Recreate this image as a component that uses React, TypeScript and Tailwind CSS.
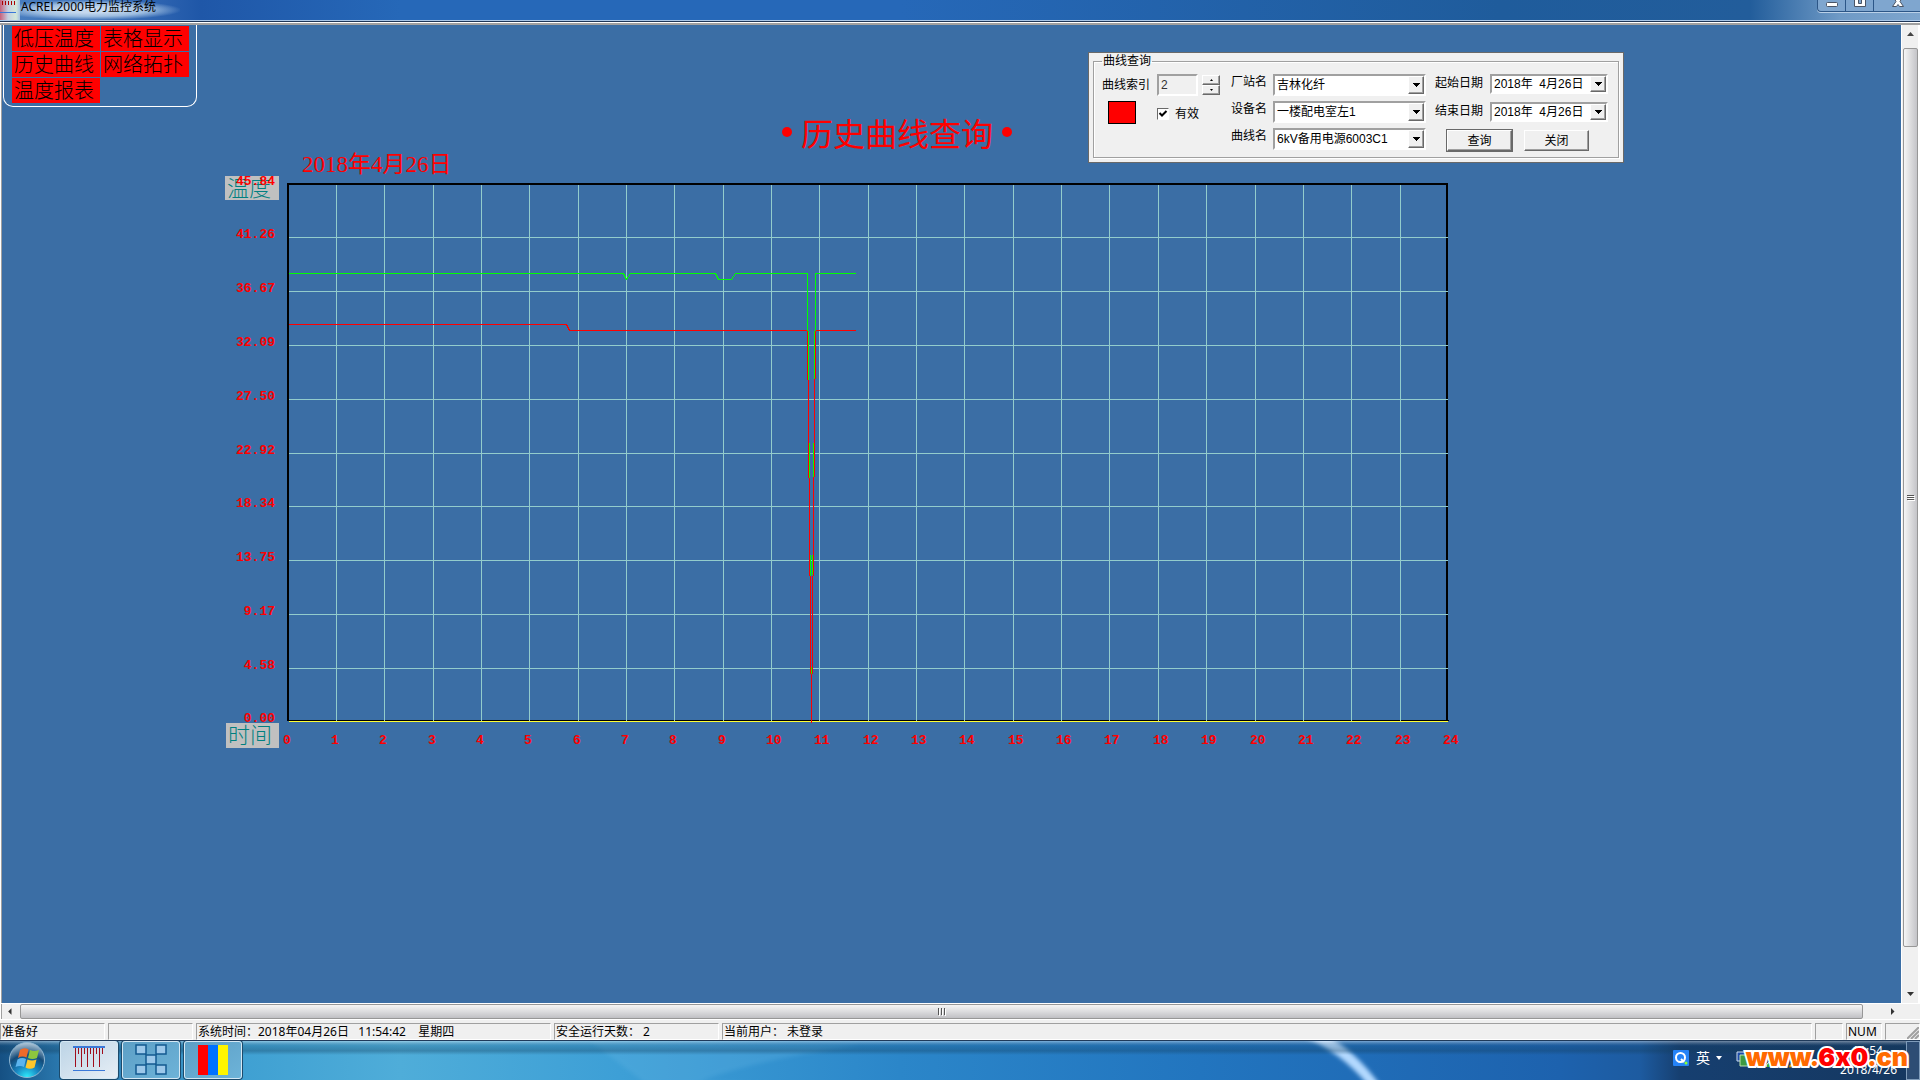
import { useState } from 'react'
import type { ReactNode } from 'react'

const HOURS = Array.from({ length: 25 }, (_, i) => i)
const TEMPERATURES = [
  '45.84',
  '41.26',
  '36.67',
  '32.09',
  '27.50',
  '22.92',
  '18.34',
  '13.75',
  '9.17',
  '4.58',
  '0.00',
]

const PLOT = { left: 288, top: 183, right: 1448, bottom: 721 }

const PAGES = ['低压温度', '表格显示', '历史曲线', '网络拓扑', '温度报表']

const GREEN_CURVE =
  'M288 273H623L626 279L630 273H715L718 279H731L735 273H807V330M808 330V379M809 442V477M810 554V575M811 666V673M812 554V574M813 442V476M814 330V378M815 330V273H855'
const RED_CURVE =
  'M288 324H566L569 330H807V379M808 379V477M809 477V575M810 575V673M811 673V722M812 575V673M813 476V575M814 378V476M815 378V330H855'

export default function App() {
  return (
    <div className="flex min-h-screen flex-col overflow-hidden bg-[#f0f0f0] font-['Noto_Sans','Noto_Sans_CJK_SC',sans-serif] text-xs text-black">
      <TitleBar />
      <div className="flex flex-1 border-l border-white">
        <main className="min-w-0 flex-1 border-l border-[#a0a0a0] bg-[#3b6ea5]">
          <div className="flex h-[151px] items-start">
            <div className="w-[460px] shrink-0">
              <PageMenu />
              <p className="mt-[46px] ml-[300px] font-['Liberation_Serif','Noto_Sans_CJK_SC',serif] text-[23px] leading-6 text-[#f00]">
                2018年4月26日
              </p>
            </div>
            <h1 className="mt-[87px] ml-[320px] flex w-[230px] shrink-0 items-center justify-between font-['Noto_Sans_CJK_SC',sans-serif] text-[32px] leading-10 font-normal whitespace-nowrap text-[#f00]">
              <span className="size-[10px] rounded-full bg-[#f00]" />
              历史曲线查询
              <span className="size-[10px] rounded-full bg-[#f00]" />
            </h1>
            <QueryPanel />
          </div>
          <HistoryChart />
        </main>
        <VerticalScroll />
      </div>
      <HorizontalScroll />
      <StatusBar />
      <Taskbar />
    </div>
  )
}

function TitleBar() {
  return (
    <header className="border-b-2 border-[#a0a0a0]">
      <div className="flex h-5 items-start justify-between overflow-hidden bg-[linear-gradient(90deg,#4a7fc0_0,#3a6fb8_120px,#1f57a8_200px,#2668b8_400px,#2668b8_900px,#1f5c9c_1500px,#225d9b_1750px,#6f9ac6_1840px,#7ea5cd_100%)]">
        <div className="flex h-5 w-[180px] bg-[radial-gradient(ellipse_at_center,#c4d8ee_20%,#9dbde0_45%,transparent_72%)]">
          <svg className="h-5 w-5" viewBox="0 0 20 20" aria-hidden="true">
            <defs>
              <linearGradient id="icon-glow">
                <stop offset="0" stopColor="#c8607c" />
                <stop offset="0.4" stopColor="#c3cfe0" />
                <stop offset="0.8" stopColor="#d3e8d8" />
                <stop offset="1" stopColor="#a5c2e3" />
              </linearGradient>
            </defs>
            <rect width="20" height="20" fill="url(#icon-glow)" />
            <path d="M2.500 1v4M5.500 1v4M8.500 1v4M11.500 1v4M14.500 1v4" stroke="#a00" />
            <path d="M0 12.500h16" stroke="#3a78d8" />
          </svg>
          <span className="ml-px leading-[14px] whitespace-nowrap">ACREL2000电力监控系统</span>
        </div>
        <div className="flex h-3 overflow-hidden rounded-bl border-b border-l border-[#2c5687] bg-[#7fa6cf] shadow-[0_1px_0_#b9d0e8]">
          <button aria-label="最小化" className="w-7 border-r border-[#2c5687]">
            <svg className="h-3 w-7" viewBox="0 0 28 12">
              <rect x="8.500" y="2.500" width="11" height="4" rx="1" fill="#fff" stroke="#4b5566" />
            </svg>
          </button>
          <button aria-label="最大化" className="w-7 border-r border-[#2c5687]">
            <svg className="h-3 w-7" viewBox="0 0 28 12">
              <path d="M8.500 -3h11v9.500h-11z" fill="#fff" stroke="#4b5566" />
              <path d="M12.500 -1h3v4.500h-3z" fill="#7fa6cf" stroke="#4b5566" />
            </svg>
          </button>
          <button aria-label="关闭" className="w-[46px]">
            <svg className="h-3 w-[46px]" viewBox="0 0 46 12">
              <path
                d="M19.500 -3L22 1.500L18.500 6.500H22.500L24 4.500L25.500 6.500H29.500L26 1.500L28.500 -3z"
                fill="#fff"
                stroke="#4b5566"
              />
            </svg>
          </button>
        </div>
      </div>
      <div className="h-px bg-[#a9c6e6]" />
      <div className="h-px bg-[#1d3557]" />
      <div className="h-px bg-white" />
    </header>
  )
}

function PageMenu() {
  return (
    <nav className="ml-px grid h-[82px] w-[194px] grid-cols-[88px_88px] content-start gap-px rounded-b-[10px] border border-t-0 border-white pt-px pl-2">
      {PAGES.map((page) => (
        <button
          key={page}
          className="flex h-[25px] justify-center bg-[#f00] pr-1 font-['Noto_Sans_CJK_SC',sans-serif] text-xl leading-[23px] font-light"
        >
          {page}
        </button>
      ))}
    </nav>
  )
}

const sunken = 'border-2 border-t-[#a0a0a0] border-l-[#a0a0a0] border-r-white border-b-white'
const raised =
  'border border-t-white border-l-white border-r-[#696969] border-b-[#696969] bg-[#f0f0f0] shadow-[inset_-1px_-1px_0_#a0a0a0]'

function QueryPanel() {
  const [enabled, setEnabled] = useState(true)

  return (
    <form
      className="mt-[27px] ml-[76px] w-[536px] shrink-0 border border-[#696969] bg-[#f0f0f0] px-1 pb-1 font-['Liberation_Sans','Noto_Sans_CJK_SC',sans-serif] text-xs leading-4"
      onSubmit={(e) => e.preventDefault()}
    >
      <fieldset className="flex h-[105px] gap-[9px] border border-[#a0a0a0] pt-[5px] pl-2 shadow-[inset_1px_1px_0_#fff,1px_1px_0_#fff]">
        <legend className="px-px">曲线查询</legend>

        <div className="flex w-[120px] flex-col gap-1">
          <div className="flex h-[22px] items-center">
            <label htmlFor="curve-index" className="w-[55px]">
              曲线索引
            </label>
            <input
              id="curve-index"
              defaultValue="2"
              className={`h-[22px] w-[41px] bg-[#f0f0f0] pl-[2px] text-[#333] ${sunken}`}
            />
            <div className="ml-1 flex flex-col">
              <SpinButton label="增加" d="M3 3h3L4.500 1z" />
              <SpinButton label="减少" d="M3 1h3L4.500 3z" />
            </div>
          </div>
          <div className="flex h-6 items-center">
            <span className="mr-[21px] ml-[6px] h-[23px] w-7 border border-black bg-[#f00]" />
            <label className="flex items-center gap-[6px] pt-1">
              <input
                type="checkbox"
                checked={enabled}
                onChange={(e) => setEnabled(e.target.checked)}
                className="peer sr-only"
              />
              <span className="block size-3 border border-t-[#696969] border-r-white border-b-white border-l-[#696969] bg-white">
                {enabled && (
                  <svg viewBox="0 0 10 10" className="size-[10px]">
                    <path d="M1.500 4L4 6.500L8.500 2" fill="none" stroke="#000" strokeWidth="2" />
                  </svg>
                )}
              </span>
              有效
            </label>
          </div>
        </div>

        <div className="flex flex-col gap-[5px]">
          <Combo id="station" label="厂站名" value="吉林化纤" />
          <Combo id="device" label="设备名" value="一楼配电室左1" />
          <Combo id="curve" label="曲线名" value="6kV备用电源6003C1" />
        </div>

        <div className="flex flex-col gap-2">
          <DateBox id="start-date" label="起始日期" />
          <DateBox id="end-date" label="结束日期" />
          <div className="flex gap-3 pl-3">
            <button className={`h-[21px] w-[65px] outline outline-[#696969] ${raised}`}>查询</button>
            <button type="button" className={`h-[21px] w-[65px] ${raised}`}>
              关闭
            </button>
          </div>
        </div>
      </fieldset>
    </form>
  )
}

function SpinButton({ label, d }: { label: string; d: string }) {
  return (
    <button
      type="button"
      aria-label={label}
      className={`flex h-[10px] w-[18px] items-center justify-center ${raised}`}
    >
      <svg className="h-1 w-[9px]" viewBox="0 0 9 4">
        <path d={d} />
      </svg>
    </button>
  )
}

function DownArrow() {
  return (
    <svg className="h-[4px] w-[7px]" viewBox="0 0 7 4" shapeRendering="crispEdges">
      <path d="M0 0h7L3.500 4z" />
    </svg>
  )
}

function Combo({ id, label, value }: { id: string; label: string; value: string }) {
  return (
    <div className="flex h-[22px]">
      <label htmlFor={id} className="w-[42px]">
        {label}
      </label>
      <div className={`relative w-[153px] bg-white ${sunken}`}>
        <select id={id} className="h-full w-full appearance-none pl-[2px] leading-[18px] outline-none">
          <option>{value}</option>
        </select>
        <span
          className={`pointer-events-none absolute inset-y-0 right-0 flex w-4 items-center justify-center ${raised}`}
        >
          <DownArrow />
        </span>
      </div>
    </div>
  )
}

function DateBox({ id, label }: { id: string; label: string }) {
  return (
    <div className="flex h-5">
      <label htmlFor={id} className="w-[55px] pt-px">
        {label}
      </label>
      <div className={`flex w-[118px] bg-white ${sunken}`}>
        <input id={id} defaultValue="2018年  4月26日" className="w-0 flex-1 pl-[2px] leading-4 outline-none" />
        <button type="button" aria-label="选择日期" className={`flex w-4 items-center justify-center ${raised}`}>
          <DownArrow />
        </button>
      </div>
    </div>
  )
}

function hourX(hour: number) {
  return PLOT.left + Math.floor(hour * 48.35)
}

function rowY(row: number) {
  return Math.ceil(PLOT.top + 0.1 + row * 53.8)
}

function HistoryChart() {
  return (
    <svg
      className="ml-[208px] h-[575px] w-[1260px] overflow-visible font-['Liberation_Mono',monospace] text-[13px] font-bold"
      viewBox="210 176 1260 575"
      role="img"
      aria-label="历史曲线"
    >
      <rect x="225" y="176" width="54" height="24" fill="#c0c0c0" />
      <BadgeText x={227} y={196}>
        温度
      </BadgeText>
      {TEMPERATURES.map((t, i) => (
        <text key={t} x="275" y={Math.min(rowY(i), PLOT.bottom) + 1} textAnchor="end" fill="#f00">
          {t}
        </text>
      ))}
      <rect x="226" y="723" width="53" height="25" fill="#c0c0c0" />
      <BadgeText x={228} y={743}>
        时间
      </BadgeText>
      {HOURS.map((h) => (
        <text key={h} x={hourX(h) - 5} y="744" fill="#f00">
          {h}
        </text>
      ))}

      <g fill="none" shapeRendering="crispEdges">
        <path d="M288 721V184M287 184H1448M1447 183V721" stroke="#000" strokeWidth="2" />
        <g transform="translate(0.5 0.5)">
          <path d="M288 720H1448" stroke="#000" />
          <g stroke="#93cccc">
            {HOURS.slice(1, 24).map((h) => (
              <path key={h} d={`M${hourX(h)} 184V720`} />
            ))}
            {TEMPERATURES.slice(1, 10).map((t, i) => (
              <path key={t} d={`M288 ${rowY(i + 1)}H1447`} />
            ))}
          </g>
          <path d="M288 721H1447" stroke="#ff3" />
          <path d={RED_CURVE} stroke="#f00" />
          <path d={GREEN_CURVE} stroke="#0f0" />
        </g>
      </g>
    </svg>
  )
}

function BadgeText({ x, y, children }: { x: number; y: number; children: ReactNode }) {
  return (
    <text
      x={x}
      y={y}
      fill="#008080"
      className="font-['Noto_Sans_CJK_SC',sans-serif] text-[22px] font-light"
    >
      {children}
    </text>
  )
}

function VerticalScroll() {
  return (
    <div className="flex w-[19px] flex-col items-center border-r-2 border-l border-r-white border-l-white bg-[#f0f0f0]">
      <svg className="h-[23px] w-[15px]" viewBox="0 0 15 23">
        <path d="M4 11h7L7.500 7z" fill="#444" />
      </svg>
      <div className="flex w-[15px] flex-1 flex-col items-center justify-center gap-px rounded-[2px] border border-[#979797] bg-linear-to-r from-[#f5f5f5] via-[#dcdcde] to-[#c4c4c8]">
        <Grip className="h-px w-[7px]" />
        <Grip className="h-px w-[7px]" />
        <Grip className="h-px w-[7px]" />
      </div>
      <svg className="mt-[39px] h-[17px] w-[15px]" viewBox="0 0 15 17">
        <path d="M4 6h7L7.500 10z" fill="#333" />
      </svg>
    </div>
  )
}

function Grip({ className }: { className: string }) {
  return <span className={`bg-[#555] shadow-[1px_1px_0_#fff] ${className}`} />
}

function HorizontalScroll() {
  return (
    <div className="flex h-4 items-center border-t border-l border-white pr-[19px]">
      <svg className="h-[15px] w-[19px] border-l border-[#a0a0a0]" viewBox="0 0 19 15">
        <path d="M10 4v7L6.500 7.500z" fill="#333" />
      </svg>
      <div className="flex h-[15px] flex-1 items-center justify-center gap-[2px] rounded-[2px] border border-[#979797] bg-linear-to-b from-[#f5f5f5] via-[#dcdcde] to-[#c0c0c4]">
        <Grip className="h-[7px] w-px" />
        <Grip className="h-[7px] w-px" />
        <Grip className="h-[7px] w-px" />
      </div>
      <svg className="ml-[19px] h-[15px] w-[19px]" viewBox="0 0 19 15">
        <path d="M9 4v7L12.500 7.500z" fill="#333" />
      </svg>
    </div>
  )
}

function StatusBar() {
  return (
    <footer className="flex h-[21px] gap-[3px] border-t border-white bg-[#f0f0f0] pt-[3px] leading-4 whitespace-pre">
      <StatusCell className="w-[105px]">准备好</StatusCell>
      <StatusCell className="w-[85px]" />
      <StatusCell className="w-[355px]">{'系统时间：2018年04月26日   11:54:42    星期四'}</StatusCell>
      <StatusCell className="w-[165px]">安全运行天数： 2</StatusCell>
      <StatusCell className="flex-1">当前用户： 未登录</StatusCell>
      <StatusCell className="w-7" />
      <StatusCell className="w-9">NUM</StatusCell>
      <StatusCell className="flex w-[35px] justify-end">
        <svg className="size-3 self-end" viewBox="0 0 12 12">
          <path d="M0 12L12 0M4 12L12 4M8 12L12 8" stroke="#a0a0a0" strokeWidth="2" />
        </svg>
      </StatusCell>
    </footer>
  )
}

function StatusCell({ className, children }: { className: string; children?: ReactNode }) {
  return (
    <div className={`border border-t-[#a0a0a0] border-r-white border-b-white border-l-[#a0a0a0] pl-px ${className}`}>
      {children}
    </div>
  )
}

function Taskbar() {
  return (
    <div className="relative flex h-10 items-start justify-between overflow-hidden border-t border-[#1f3a5a] bg-[linear-gradient(90deg,#155083_0,#2a78ae_60px,#3fa0d2_240px,#4fadd9_400px,#3d9fd6_620px,#2b86c9_900px,#2275bf_1200px,#1d62ae_1560px,#1d5ba0_1640px,#163f70_1680px,#15375f_100%)]">
      <svg className="absolute inset-0 h-10 w-full" aria-hidden="true">
        <defs>
          <linearGradient id="bar-shade" x1="0" y1="0" x2="0" y2="1">
            <stop offset="0" stopColor="#fff" stopOpacity="0.4" />
            <stop offset="0.35" stopColor="#123c5a" stopOpacity="0.2" />
            <stop offset="0.7" stopColor="#123c5a" stopOpacity="0.35" />
            <stop offset="1" stopColor="#123c5a" stopOpacity="0" />
          </linearGradient>
          <filter id="soft">
            <feGaussianBlur stdDeviation="2" />
          </filter>
        </defs>
        <path d="M590 0L645 42H800L700 40Q760 18 860 4z" fill="#6bb9e6" opacity="0.25" filter="url(#soft)" />
        <path d="M1300 -6Q1340 10 1368 44L1380 44Q1354 8 1322 -8z" fill="#b3d9ff" filter="url(#soft)" />
        <rect width="100%" height="14" fill="url(#bar-shade)" />
      </svg>

      <div className="relative flex items-center gap-1">
        <button aria-label="开始" className="mr-[2px] ml-2 size-[38px]">
          <StartOrb />
        </button>
        <div className="ml-2 flex gap-1">
          <TaskButton label="ACREL2000" tone="from-[#bcd4e6] to-[#e6eef5]">
            <path d="M0 3h32" stroke="#3a78d8" strokeWidth="2" />
            <path d="M0 26.500h32" stroke="#3a78d8" />
            <path
              d="M2.500 4v19M5.500 4v6M8.500 4v19M11.500 4v6M14.500 4v19M17.500 4v6M20.500 4v19M23.500 4v6M26.500 4v19M29.500 4v6"
              stroke="#a00d1c"
            />
          </TaskButton>
          <TaskButton label="网络" tone="from-[#5d9fc6] to-[#6db3d8]">
            <path d="M6 6L26 26M26 6L6 26" stroke="#24648f" />
            {['1 1', '21 1', '11 11', '1 21', '21 21'].map((at) => (
              <rect
                key={at}
                width="10"
                height="9"
                transform={`translate(${at})`}
                fill="#9cc8ea"
                stroke="#135a90"
                strokeWidth="1.500"
              />
            ))}
          </TaskButton>
          <TaskButton label="色带" tone="from-[#5d9fc6] to-[#6db3d8]">
            <path d="M1 1h10v30H1z" fill="#f00" />
            <path d="M11 1h10v30H11z" fill="#0071ff" />
            <path d="M21 1h10v30H21z" fill="#fff500" />
          </TaskButton>
        </div>
      </div>

      <div className="relative flex h-full text-white">
        <div className="flex h-[34px] items-center">
          <svg className="mr-[7px] size-4" viewBox="0 0 16 16">
            <rect width="16" height="16" rx="1" fill="#2583f7" />
            <circle cx="7.500" cy="7.500" r="4.500" fill="none" stroke="#fff" strokeWidth="2" />
            <path d="M8 9l3 3" stroke="#fff" strokeWidth="2" />
            <circle cx="13" cy="13" r="1.500" fill="#8f3" />
          </svg>
          <span className="text-[14px]">英</span>
          <svg className="mr-[10px] ml-[6px] h-[4px] w-[6px]" viewBox="0 0 6 4">
            <path d="M0 0h6L3 4z" fill="#fff" />
          </svg>
          <svg className="mt-1 h-5 w-[76px]" viewBox="0 0 76 20">
            <path d="M5 2h12v9H5z" fill="#1e4ba8" stroke="#cde" />
            <path d="M8 5h12v11H8z" fill="#3d9a3f" stroke="#bde0b0" />
            <path d="M34 17a5 5 0 1 1 10 0" fill="#3caa30" stroke="#fff" />
            <path d="M57 17l6-11l6 11z" fill="#ffcc1c" stroke="#a87500" />
            <path d="M63 10v4" stroke="#333" />
          </svg>
        </div>
        <div className="w-[98px] pr-[9px] text-right leading-[19px]">
          <div className="pr-[14px]">11:54</div>
          <div>2018/4/26</div>
        </div>
        <button aria-label="显示桌面" className="h-full w-[14px] border border-[#7f9cba] bg-[#2d4d74]" />
        <a
          href="#"
          className="absolute right-[12px] bottom-[9px] font-['Inter','Liberation_Sans',sans-serif] text-[25px] leading-7 font-black text-[#ff6a00] [-webkit-text-stroke:4px_#fff] [font-feature-settings:'calt'_0] [paint-order:stroke_fill]"
        >
          www.<span className="text-[#f00]">6x0</span>.cn
        </a>
      </div>
    </div>
  )
}

function TaskButton({ label, tone, children }: { label: string; tone: string; children: ReactNode }) {
  return (
    <button
      aria-label={label}
      className={`flex h-[38px] w-[58px] items-center justify-center rounded-[3px] border border-[#d5e8f4] bg-linear-to-br shadow-[0_0_0_1px_#1c4a6b] ${tone}`}
    >
      <svg className="size-8" viewBox="0 0 32 32" fill="none">
        {children}
      </svg>
    </button>
  )
}

function StartOrb() {
  return (
    <svg className="size-[38px]" viewBox="0 0 38 38">
      <defs>
        <radialGradient id="orb" cx="0.5" cy="1" r="1">
          <stop offset="0" stopColor="#2ff0ff" />
          <stop offset="0.35" stopColor="#1884c0" />
          <stop offset="0.65" stopColor="#134a78" />
          <stop offset="1" stopColor="#b5cbdc" />
        </radialGradient>
      </defs>
      <circle cx="19" cy="19" r="17.500" fill="url(#orb)" stroke="#8fb6d2" />
      <path d="M12 9Q16 6 20.500 8.500L18.500 16.500Q14 14.500 10 17z" fill="#ee6a2b" />
      <path d="M22 9Q26.500 11 31 9L29 17Q24.500 19 20 17z" fill="#8cc63e" />
      <path d="M9.500 18.500Q14 16 18 18L16 26Q12 24 7.500 26z" fill="#5cb4ee" />
      <path d="M19.500 18.500Q24 20.500 28.500 18.500L26.500 26.500Q22 29 17.500 26.500z" fill="#ffc72c" />
    </svg>
  )
}
